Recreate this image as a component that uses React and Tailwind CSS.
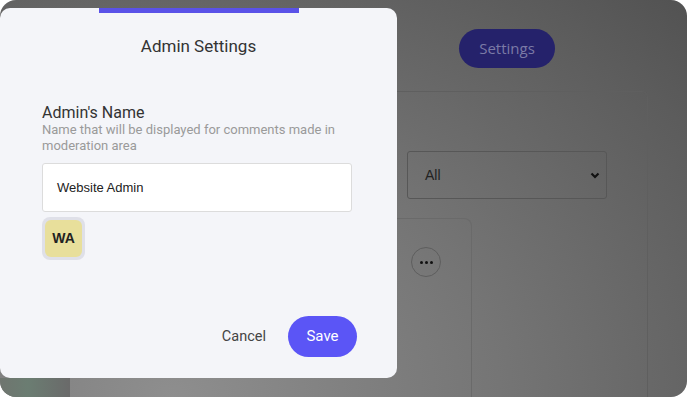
import React from 'react';

export default function App() {
  return (
    <div className="w-[687px] h-[397px] bg-white">
      <div className="relative w-full h-full rounded-[16px] overflow-hidden flex bg-[radial-gradient(ellipse_at_25%_100%,#8e8e8e_0%,#757575_45%,#5c5c5c_85%,#525252_100%)]">
        {/* page behind the overlay */}
        <div className="w-[70px] h-full flex flex-col justify-end">
          <div className="h-[19px] bg-[linear-gradient(90deg,#6f756f,#6b7d72_40%,#6a6a6a)]" />
        </div>
        <div className="flex-1 flex flex-col">
          <div className="h-[91px] flex items-start pt-[29px] pl-[389px]">
            <div className="h-[39px] w-[96px] rounded-full bg-[#25226b] flex items-center justify-center text-[15px] text-[#7b7aa6] font-['Open_Sans']">
              Settings
            </div>
          </div>
          <div className="flex-1 ml-[260px] w-[318px] border-t border-r border-[#5f5f5f] rounded-tr-[6px] flex flex-col">
            <div className="pt-[59px] pl-[77px]">
              <div className="w-[200px] h-[48px] rounded-[3px] border border-[#575757] flex items-center justify-between pl-[17px] pr-[5px] font-['Liberation_Sans'] text-[14px] text-[#222]">
                <span>All</span>
                <svg width="12" height="12" viewBox="0 0 12 12" fill="none" stroke="#111" strokeWidth="2.2">
                  <path d="M2.5 4.5 L6 8 L9.5 4.5" />
                </svg>
              </div>
            </div>
            <div className="mt-[19px] w-[142px] flex-1 border-t border-r border-[#6a6a6a] rounded-tr-[8px] flex justify-end pr-[30px] pt-[28px]">
              <div className="w-[30px] h-[30px] rounded-full border border-[#5e5e5e] flex items-center justify-center gap-[2px]">
                <span className="w-[3px] h-[3px] rounded-full bg-[#111]" />
                <span className="w-[3px] h-[3px] rounded-full bg-[#111]" />
                <span className="w-[3px] h-[3px] rounded-full bg-[#111]" />
              </div>
            </div>
          </div>
        </div>

        {/* modal */}
        <div className="absolute left-0 top-[8px] w-[397px] h-[370px] bg-[#f4f5f9] rounded-[10px] flex flex-col font-['Roboto']">
          <div className="mx-auto w-[200px] h-[5px] bg-[#5a52e8]" />
          <h2 className="mt-[23px] text-center text-[17px] leading-[20px] text-[#333]">Admin Settings</h2>
          <div className="pl-[42px] pr-[45px] mt-[48px] flex flex-col">
            <div className="text-[16px] leading-[18px] text-[#333]">Admin's Name</div>
            <div className="text-[13px] leading-[16px] text-[#9a9a9a]">
              Name that will be displayed for comments made in moderation area
            </div>
            <div className="mt-[9px] h-[49px] bg-white border border-[#dcdcdc] rounded-[3px] flex items-center pl-[14px] font-['Liberation_Sans'] text-[13px] text-[#222]">
              Website Admin
            </div>
            <div className="mt-[5px] w-[43px] h-[43px] rounded-[8px] bg-[#dfe0e8] p-[3px]">
              <div className="w-full h-full rounded-[6px] bg-[#e8df9b] flex items-center justify-center font-['Liberation_Sans'] font-bold text-[14px] text-[#222]">
                WA
              </div>
            </div>
          </div>
          <div className="mt-auto mb-[21px] pr-[40px] flex items-center justify-end gap-[22px]">
            <button className="text-[14.5px] text-[#444]">Cancel</button>
            <button className="h-[41px] w-[69px] rounded-full bg-[#5b55f6] text-white text-[15px]">Save</button>
          </div>
        </div>
      </div>
    </div>
  );
}
